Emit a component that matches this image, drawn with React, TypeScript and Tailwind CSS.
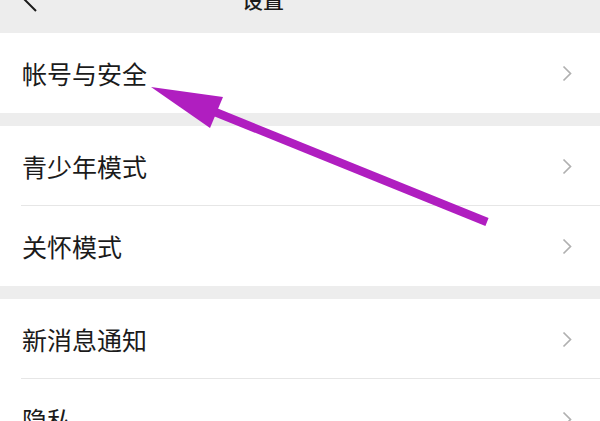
const font = "font-['Noto_Sans_CJK_SC','Noto_Sans',sans-serif]"

function Chevron() {
    return (
        <svg width="10" height="17" viewBox="0 0 10 17" fill="none">
            <path d="M1.5 1.5L8.5 8.5L1.5 15.5" stroke="#b0b0b0" strokeWidth="1.7" />
        </svg>
    )
}

function Row({ label, divider }: { label: string; divider?: boolean }) {
    return (
        <div className="relative flex h-[80px] shrink-0 items-center justify-between bg-white pl-[22px] pr-[28px]">
            <span className={`${font} text-[25px] leading-none text-[#1b1b1b]`}>{label}</span>
            <Chevron />
            {divider && <div className="absolute bottom-0 left-[21px] right-0 h-px bg-[#e6e6e6]" />}
        </div>
    )
}

export default function App() {
    return (
        <div className={`relative flex h-[421px] w-[600px] flex-col overflow-hidden bg-[#ededed] ${font}`}>
            <div className="flex h-[33px] shrink-0 items-start">
                <div className="-mt-[14px] flex w-full items-center">
                    <svg width="20" height="26" viewBox="0 0 20 26" fill="none" className="ml-[20px]">
                        <path d="M15 1L4 13L16 25" stroke="#1b1b1b" strokeWidth="2" />
                    </svg>
                    <div className="ml-[202px] text-[21px] font-medium leading-none text-[#1b1b1b]">设置</div>
                </div>
            </div>
            <Row label="帐号与安全" />
            <div className="h-[13px] shrink-0" />
            <Row label="青少年模式" divider />
            <Row label="关怀模式" />
            <div className="h-[13px] shrink-0" />
            <Row label="新消息通知" divider />
            <Row label="隐私" />
            <svg className="pointer-events-none absolute left-0 top-0" width="600" height="421" viewBox="0 0 600 421">
                <line x1="215" y1="112" x2="487" y2="222" stroke="#b01ec0" strokeWidth="8.5" />
                <polygon points="151,87 223,97 210,128" fill="#b01ec0" />
            </svg>
        </div>
    )
}
